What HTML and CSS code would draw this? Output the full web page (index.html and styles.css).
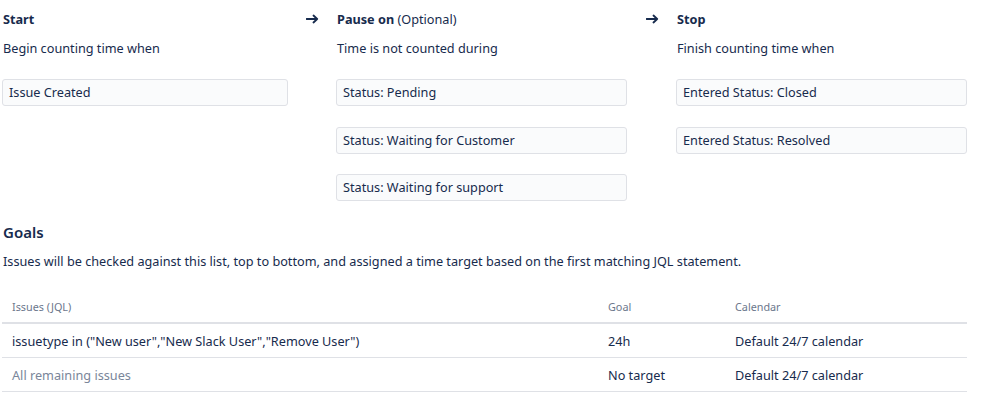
FILE: index.html
```html
<!DOCTYPE html>
<html>
<head>
<meta charset="utf-8">
<link rel="stylesheet" href="styles.css">
</head>
<body>
<div class="page">
  <div class="flow">
    <div class="col">
      <div class="title"><b>Start</b></div>
      <div class="sub">Begin counting time when</div>
      <div class="field">Issue Created</div>
    </div>
    <div class="col arrowed">
      <svg class="arrow" width="13" height="10" viewBox="0 0 13 10"><path d="M0.5 5H11M7.5 1.5L11.2 5L7.5 8.5" fill="none" stroke="#172b4d" stroke-width="1.8" stroke-linecap="round" stroke-linejoin="round"/></svg>
      <div class="title"><b>Pause on</b> (Optional)</div>
      <div class="sub">Time is not counted during</div>
      <div class="field">Status: Pending</div>
      <div class="field">Status: Waiting for Customer</div>
      <div class="field">Status: Waiting for support</div>
    </div>
    <div class="col arrowed">
      <svg class="arrow" width="13" height="10" viewBox="0 0 13 10"><path d="M0.5 5H11M7.5 1.5L11.2 5L7.5 8.5" fill="none" stroke="#172b4d" stroke-width="1.8" stroke-linecap="round" stroke-linejoin="round"/></svg>
      <div class="title"><b>Stop</b></div>
      <div class="sub">Finish counting time when</div>
      <div class="field">Entered Status: Closed</div>
      <div class="field">Entered Status: Resolved</div>
    </div>
  </div>

  <h2 class="goals">Goals</h2>
  <p class="desc">Issues will be checked against this list, top to bottom, and assigned a time target based on the first matching JQL statement.</p>

  <table class="tbl">
    <thead>
      <tr><th class="c1">Issues (JQL)</th><th class="c2">Goal</th><th class="c3">Calendar</th></tr>
    </thead>
    <tbody>
      <tr><td class="c1">issuetype in ("New user","New Slack User","Remove User")</td><td class="c2">24h</td><td class="c3">Default 24/7 calendar</td></tr>
      <tr><td class="c1 muted">All remaining issues</td><td class="c2">No target</td><td class="c3">Default 24/7 calendar</td></tr>
    </tbody>
  </table>
</div>
</body>
</html>
```

FILE: styles.css
```css
html, body {
  margin: 0;
  padding: 0;
  background: #ffffff;
}
body {
  font-family: "Segoe UI", "Noto Sans", sans-serif;
  font-size: 12.7px;
  color: #172b4d;
}
.page {
  padding: 8px 0 0 2px;
  width: 966px;
}
.flow {
  display: grid;
  grid-template-columns: 304px 340px 322px;
}
.col {
  position: relative;
  display: flex;
  flex-direction: column;
}
.col.arrowed {
  padding-left: 30px;
}
.arrow {
  position: absolute;
  left: 0;
  top: 6px;
}
.title {
  line-height: 22px;
  height: 22px;
  padding-left: 1px;
}
.title b {
  font-weight: 700;
}
.sub {
  margin-top: 7px;
  line-height: 22px;
  padding-left: 1px;
}
.field {
  box-sizing: border-box;
  height: 27px;
  margin-top: 20px;
  border: 1px solid #dfe1e6;
  border-radius: 3px;
  background: #fafbfc;
  padding: 0 6px;
  line-height: 25px;
  width: 291px;
}
.col .field + .field {
  margin-top: 20.5px;
}
.col:first-child .field {
  width: 286px;
}
.goals {
  margin: 20px 0 0 0;
  padding-left: 1px;
  font-size: 15px;
  font-weight: 600;
  line-height: 22px;
}
.desc {
  margin: 8px 0 0 0;
  padding-left: 1px;
  line-height: 20px;
}
.tbl {
  margin-top: 19px;
  width: 965px;
  border-collapse: collapse;
}
.tbl th {
  text-align: left;
  font-weight: 400;
  font-size: 10.8px;
  color: #6b778c;
  height: 32px;
  padding: 0 0 0 10px;
  border-bottom: 2px solid #dfe1e6;
  vertical-align: middle;
}
.tbl td {
  height: 33px;
  padding: 0 0 0 10px;
  border-bottom: 1px solid #dfe1e6;
  vertical-align: middle;
}
.tbl .c2 { width: 117px; }
.tbl .c3 { width: 232px; }
.muted { color: #7a869a; }
```
